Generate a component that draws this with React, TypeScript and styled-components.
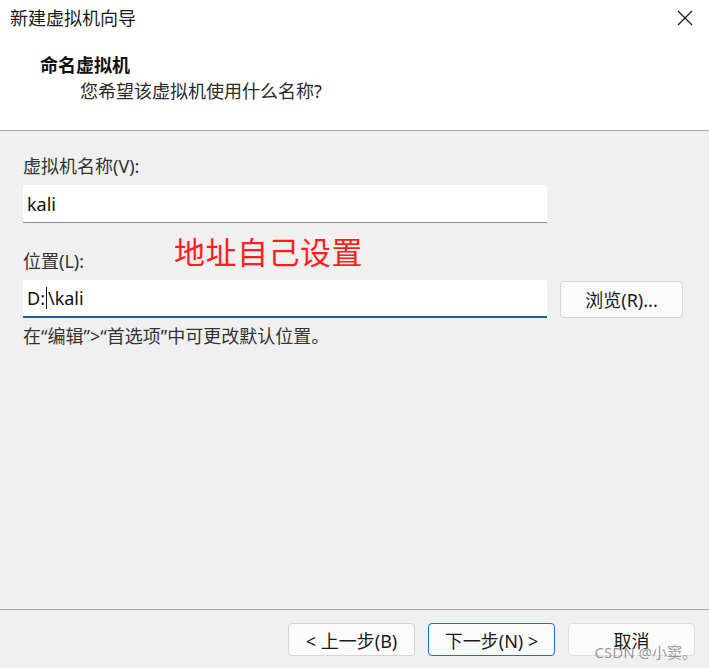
import React from "react";
import styled, { createGlobalStyle } from "styled-components";

const Global = createGlobalStyle`
  html, body { margin: 0; padding: 0; background: #f0f0f0; }
  body { font-family: "Noto Sans", "Noto Sans CJK SC", sans-serif; }
  * { box-sizing: border-box; }
`;

const Window = styled.div`
  position: relative;
  width: 709px;
  height: 668px;
  display: flex;
  flex-direction: column;
  background: #f0f0f0;
  color: #1a1a1a;
  font-family: "Noto Sans", "Noto Sans CJK SC", sans-serif;
  font-size: 18px;
  overflow: hidden;
`;

const Header = styled.div`
  height: 131px;
  background: #ffffff;
  border-bottom: 1px solid #a8a8a8;
  display: flex;
  flex-direction: column;
`;

const TitleBar = styled.div`
  height: 36px;
  display: flex;
  align-items: center;
  justify-content: space-between;
  padding-left: 10px;
`;

const Title = styled.span`
  font-size: 18px;
  line-height: 26px;
  color: #1a1a1a;
`;

const CloseButton = styled.div`
  width: 48px;
  height: 36px;
  display: flex;
  align-items: center;
  justify-content: center;
`;

const Heading = styled.div`
  margin-top: 16px;
  padding-left: 40px;
  font-size: 18px;
  font-weight: 700;
  line-height: 26px;
  color: #111;
`;

const SubHeading = styled.div`
  padding-left: 80px;
  font-size: 18px;
  line-height: 26px;
  color: #2a2a2a;
`;

const Body = styled.div`
  position: relative;
  flex: 1;
  padding: 22px 0 0 23px;
  display: flex;
  flex-direction: column;
`;

const Label = styled.div<{ $gapTop?: number }>`
  margin-top: ${(p) => p.$gapTop ?? 0}px;
  font-size: 18px;
  line-height: 26px;
  color: #333;
`;

const FieldRow = styled.div`
  margin-top: 6px;
  display: flex;
  align-items: center;
  gap: 13px;
`;

const Input = styled.div<{ $focused?: boolean }>`
  width: 524px;
  height: 38px;
  background: #ffffff;
  border-radius: 3px 3px 0 0;
  border-bottom: ${(p) => (p.$focused ? "2px solid #1d5f93" : "1px solid #8c8c8c")};
  padding: 0 4px;
  display: flex;
  align-items: center;
  font-size: 18px;
  color: #111;
`;

const Caret = styled.span`
  display: inline-block;
  width: 1px;
  height: 22px;
  background: #111;
  margin: 0 1px 0 1px;
`;

const PushButton = styled.div<{ $primary?: boolean; $dim?: boolean }>`
  width: 127px;
  height: 33px;
  display: flex;
  align-items: center;
  justify-content: center;
  background: #fbfbfb;
  border: 1px solid ${(p) => (p.$primary ? "#1a6fc4" : p.$dim ? "#e0e0e0" : "#d4d4d4")};
  border-radius: 4px;
  font-size: 18px;
  color: #1a1a1a;
`;

const BrowseButton = styled(PushButton)`
  width: 123px;
  height: 37px;
`;

const Hint = styled.div`
  margin-top: 5px;
  font-size: 18px;
  line-height: 26px;
  color: #333;
`;

const Annotation = styled.div`
  position: absolute;
  left: 174px;
  top: 101px;
  font-size: 31px;
  line-height: 40px;
  color: #ff1d1d;
  letter-spacing: 0.5px;
`;

const Footer = styled.div`
  height: 59px;
  border-top: 1px solid #a8a8a8;
  display: flex;
  justify-content: flex-end;
  gap: 13px;
  padding: 13px 14px 0 0;
`;

const Watermark = styled.div`
  position: absolute;
  right: 12px;
  bottom: 6px;
  font-size: 15px;
  color: rgba(120, 120, 120, 0.75);
  font-family: "Noto Sans", "Noto Sans CJK SC", sans-serif;
`;

export default function App() {
  return (
    <>
      <Global />
      <Window>
        <Header>
          <TitleBar>
            <Title>新建虚拟机向导</Title>
            <CloseButton>
              <svg width="16" height="16" viewBox="0 0 16 16">
                <path d="M1 1 L15 15 M15 1 L1 15" stroke="#1a1a1a" strokeWidth="1.3" fill="none" />
              </svg>
            </CloseButton>
          </TitleBar>
          <Heading>命名虚拟机</Heading>
          <SubHeading>您希望该虚拟机使用什么名称?</SubHeading>
        </Header>
        <Body>
          <Label>虚拟机名称(V):</Label>
          <FieldRow>
            <Input>kali</Input>
          </FieldRow>
          <Label $gapTop={25}>位置(L):</Label>
          <FieldRow>
            <Input $focused>
              D:<Caret />\kali
            </Input>
            <BrowseButton>浏览(R)...</BrowseButton>
          </FieldRow>
          <Hint>在“编辑”&gt;“首选项”中可更改默认位置。</Hint>
          <Annotation>地址自己设置</Annotation>
        </Body>
        <Footer>
          <PushButton>&lt; 上一步(B)</PushButton>
          <PushButton $primary>下一步(N) &gt;</PushButton>
          <PushButton $dim>取消</PushButton>
        </Footer>
        <Watermark>CSDN @小窦。</Watermark>
      </Window>
    </>
  );
}
